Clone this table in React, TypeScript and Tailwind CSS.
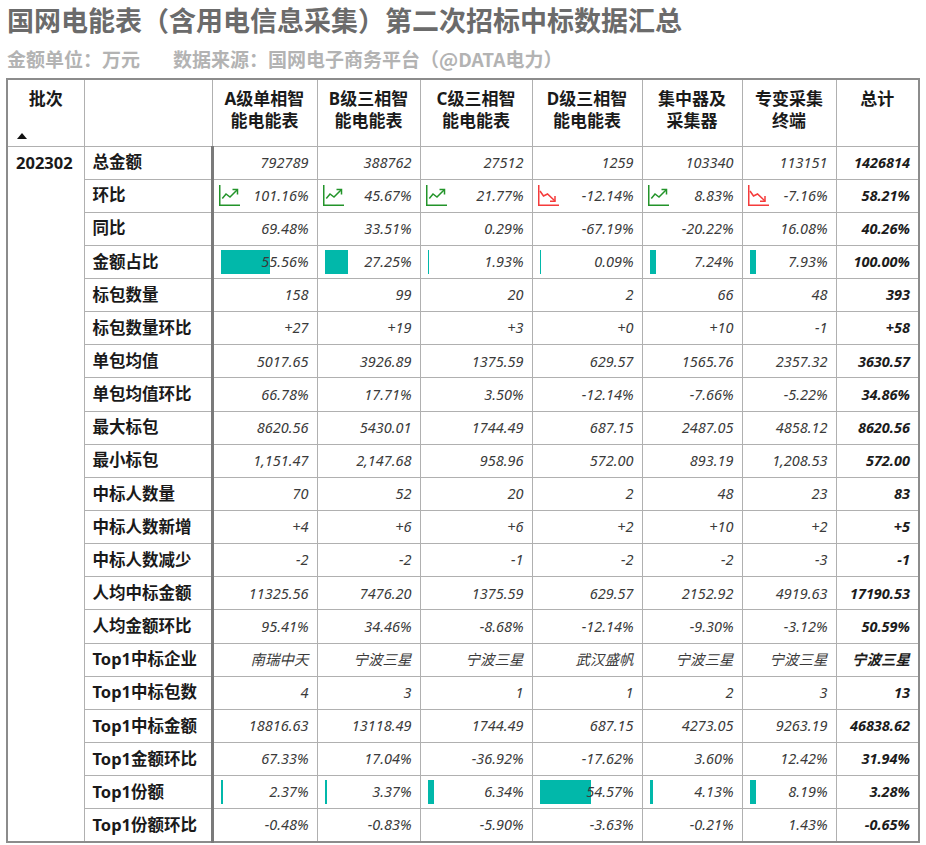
import React from "react";

type Row = { label: string; cells: string[]; kind?: "trend" | "bar" };

const heads: string[][] = [
  ["A级单相智", "能电能表"],
  ["B级三相智", "能电能表"],
  ["C级三相智", "能电能表"],
  ["D级三相智", "能电能表"],
  ["集中器及", "采集器"],
  ["专变采集", "终端"],
  ["总计"],
];

const colWidths = [77, 128, 105, 103, 112, 110, 100, 94, 83];

const rows: Row[] = [
  { label: "总金额", cells: ["792789", "388762", "27512", "1259", "103340", "113151", "1426814"] },
  { label: "环比", kind: "trend", cells: ["101.16%", "45.67%", "21.77%", "-12.14%", "8.83%", "-7.16%", "58.21%"] },
  { label: "同比", cells: ["69.48%", "33.51%", "0.29%", "-67.19%", "-20.22%", "16.08%", "40.26%"] },
  { label: "金额占比", kind: "bar", cells: ["55.56%", "27.25%", "1.93%", "0.09%", "7.24%", "7.93%", "100.00%"] },
  { label: "标包数量", cells: ["158", "99", "20", "2", "66", "48", "393"] },
  { label: "标包数量环比", cells: ["+27", "+19", "+3", "+0", "+10", "-1", "+58"] },
  { label: "单包均值", cells: ["5017.65", "3926.89", "1375.59", "629.57", "1565.76", "2357.32", "3630.57"] },
  { label: "单包均值环比", cells: ["66.78%", "17.71%", "3.50%", "-12.14%", "-7.66%", "-5.22%", "34.86%"] },
  { label: "最大标包", cells: ["8620.56", "5430.01", "1744.49", "687.15", "2487.05", "4858.12", "8620.56"] },
  { label: "最小标包", cells: ["1,151.47", "2,147.68", "958.96", "572.00", "893.19", "1,208.53", "572.00"] },
  { label: "中标人数量", cells: ["70", "52", "20", "2", "48", "23", "83"] },
  { label: "中标人数新增", cells: ["+4", "+6", "+6", "+2", "+10", "+2", "+5"] },
  { label: "中标人数减少", cells: ["-2", "-2", "-1", "-2", "-2", "-3", "-1"] },
  { label: "人均中标金额", cells: ["11325.56", "7476.20", "1375.59", "629.57", "2152.92", "4919.63", "17190.53"] },
  { label: "人均金额环比", cells: ["95.41%", "34.46%", "-8.68%", "-12.14%", "-9.30%", "-3.12%", "50.59%"] },
  { label: "Top1中标企业", cells: ["南瑞中天", "宁波三星", "宁波三星", "武汉盛帆", "宁波三星", "宁波三星", "宁波三星"] },
  { label: "Top1中标包数", cells: ["4", "3", "1", "1", "2", "3", "13"] },
  { label: "Top1中标金额", cells: ["18816.63", "13118.49", "1744.49", "687.15", "4273.05", "9263.19", "46838.62"] },
  { label: "Top1金额环比", cells: ["67.33%", "17.04%", "-36.92%", "-17.62%", "3.60%", "12.42%", "31.94%"] },
  { label: "Top1份额", kind: "bar", cells: ["2.37%", "3.37%", "6.34%", "54.57%", "4.13%", "8.19%", "3.28%"] },
  { label: "Top1份额环比", cells: ["-0.48%", "-0.83%", "-5.90%", "-3.63%", "-0.21%", "1.43%", "-0.65%"] },
];

function TrendIcon({ down }: { down?: boolean }) {
  const color = down ? "#f53b3b" : "#23942a";
  return (
    <svg className="shrink-0" width="21" height="21" viewBox="0 0 21 21" fill="none" stroke={color} strokeWidth="1.5">
      <path d="M0.75 0 V20.25 H21" />
      {down ? (
        <>
          <polyline points="2,6 5.5,11 9.5,9 17,16" />
          <polyline points="17,11 17,16.25 12,16.25" />
        </>
      ) : (
        <>
          <polyline points="3.3,13.5 7,9 11,12 18,5" />
          <polyline points="13.5,4.5 18.5,4.5 18.5,9.5" />
        </>
      )}
    </svg>
  );
}

function DataCell({ value, kind, col }: { value: string; kind?: Row["kind"]; col: number }) {
  const isTotal = col === 6;
  const pct = parseFloat(value);
  const trend = kind === "trend" && !isTotal;
  return (
    <td
      className={
        "relative border border-[#b0b0b0] pr-[8px] text-right text-[14.5px] italic " +
        (trend ? "pl-[5px] " : "pl-[8px] ") +
        (col === 0 ? "border-l-[3px] border-l-[#7a7a7a] " : "") +
        (isTotal ? "font-bold text-[#1c1c1c]" : "text-[#3a3a3a]")
      }
    >
      {kind === "bar" && !isTotal ? (
        <div className="absolute inset-y-[4px] left-[7px] right-[7px]">
          <div className="h-full bg-[#01b8aa]" style={{ width: `max(1px, ${pct}%)` }} />
        </div>
      ) : null}
      {trend ? (
        <div className="flex items-center justify-between">
          <TrendIcon down={pct < 0} />
          <span>{value}</span>
        </div>
      ) : (
        <span className="relative">{value}</span>
      )}
    </td>
  );
}

export default function App() {
  return (
    <div className="bg-white px-[6px] pt-[4px] font-['Noto_Sans','Noto_Sans_CJK_SC',sans-serif]">
      <h1 className="pl-[1px] text-[27px] font-bold leading-[32px] text-[#6b6b6b] font-['Noto_Sans_CJK_SC','Noto_Sans',sans-serif]">
        国网电能表（含用电信息采集）第二次招标中标数据汇总
      </h1>
      <div className="mt-[10px] flex gap-[33px] pl-[1px] text-[19px] font-bold leading-[26px] text-[#b3b3b3] font-['Noto_Sans_CJK_SC','Noto_Sans',sans-serif]">
        <span>金额单位：万元</span>
        <span>数据来源：国网电子商务平台（@DATA电力）</span>
      </div>
      <table className="mt-[6px] table-fixed border-collapse border-2 border-[#8c8c8c]">
        <colgroup>
          {colWidths.map((w, i) => (
            <col key={i} style={{ width: w }} />
          ))}
        </colgroup>
        <thead>
          <tr className="h-[67px]">
            <th className="border border-[#b0b0b0] pt-[8px] align-top text-[17px] font-bold leading-[22px] text-[#1a1a1a]">
              <div>批次</div>
              <div className="mt-[23px] pl-[9px] text-left">
                <svg width="10" height="6" viewBox="0 0 10 6">
                  <polygon points="0,6 5,0 10,6" fill="#111" />
                </svg>
              </div>
            </th>
            <th className="border border-[#b0b0b0]" />
            {heads.map((h, i) => (
              <th
                key={i}
                className="border border-[#b0b0b0] pt-[8px] align-top text-[17px] font-bold leading-[22px] text-[#1a1a1a]"
              >
                {h.map((line) => (
                  <div key={line}>{line}</div>
                ))}
              </th>
            ))}
          </tr>
        </thead>
        <tbody>
          {rows.map((r, ri) => (
            <tr key={r.label} className="h-[33.15px]">
              {ri === 0 ? (
                <td
                  rowSpan={rows.length}
                  className="border border-[#b0b0b0] pl-[8px] align-top text-[16.5px] font-bold leading-[32px] text-[#1a1a1a]"
                >
                  202302
                </td>
              ) : null}
              <td className="border border-[#b0b0b0] pl-[8px] text-[16.5px] font-bold text-[#1a1a1a]">
                {r.label}
              </td>
              {r.cells.map((c, ci) => (
                <DataCell key={ci} value={c} kind={r.kind} col={ci} />
              ))}
            </tr>
          ))}
        </tbody>
      </table>
    </div>
  );
}
